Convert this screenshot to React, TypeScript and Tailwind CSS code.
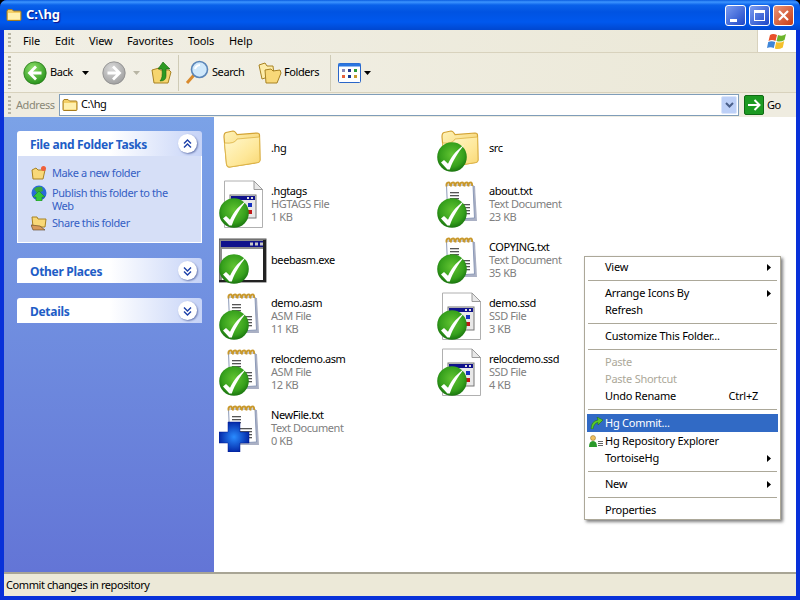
import React from "react";

const Defs = () => (
  <svg width="0" height="0" className="absolute">
    <defs>
      <linearGradient id="folderG" x1="0" y1="0" x2="1" y2="1">
        <stop offset="0" stopColor="#fff3b8" />
        <stop offset="1" stopColor="#f3c95c" />
      </linearGradient>
      <linearGradient id="folderF" x1="0" y1="0" x2="1" y2="1">
        <stop offset="0" stopColor="#fff8cf" />
        <stop offset="0.6" stopColor="#fee89a" />
        <stop offset="1" stopColor="#f8d672" />
      </linearGradient>
      <radialGradient id="checkG" cx="0.5" cy="0.42" r="0.62">
        <stop offset="0" stopColor="#62c432" />
        <stop offset="0.65" stopColor="#36a01c" />
        <stop offset="1" stopColor="#136a0c" />
      </radialGradient>
      <radialGradient id="plusG" cx="0.5" cy="0.5" r="0.55">
        <stop offset="0" stopColor="#2a8cff" />
        <stop offset="1" stopColor="#0020a0" />
      </radialGradient>
      <radialGradient id="backG" cx="0.4" cy="0.3" r="0.8">
        <stop offset="0" stopColor="#8fe06a" />
        <stop offset="1" stopColor="#1c8a12" />
      </radialGradient>
      <radialGradient id="fwdG" cx="0.4" cy="0.3" r="0.8">
        <stop offset="0" stopColor="#dadada" />
        <stop offset="1" stopColor="#9a9a9a" />
      </radialGradient>
    </defs>
  </svg>
);

const SmallFolder = ({ s = 16 }: { s?: number }) => (
  <svg width={s} height={s} viewBox="0 0 16 16" className="shrink-0">
    <path d="M1 4 L2 2.5 H6 L7.5 4 H14 Q15 4 15 5 V12.5 Q15 13.5 14 13.5 H2 Q1 13.5 1 12.5 Z" fill="#f4cf66" stroke="#a67c1c" strokeWidth="1" />
    <path d="M2 6 H14 V12.5 H2 Z" fill="#fff0ae" />
  </svg>
);

const BigFolder = () => (
  <g>
    <path d="M5 13 Q5 9 7 8.5 L14 7 Q16 7 18 10.5 L38 9 Q40.5 9 40.5 11 L41 36 Q41 38 39 38.5 L11 43 Q8 43.5 7.5 40 Z" fill="url(#folderG)" stroke="#d3a334" strokeWidth="1.2" />
    <path d="M5.5 19 Q16 20 18 15 L40.5 13 L41 36 Q41 38 39 38.5 L11 43 Q8 43.5 7.5 40 Z" fill="url(#folderF)" stroke="#dcb244" strokeWidth="0.8" />
  </g>
);

const Notepad = () => (
  <g>
    <path d="M13 6 H38 L40 41 H16 Z" fill="#aab0c4" />
    <path d="M9.5 5 H36 L37.5 38 L11 39.5 Z" fill="#ffffff" stroke="#8c9ab8" strokeWidth="1" />
    {[11, 15.5, 20, 24.5, 29, 33].map((x) => (
      <path key={x} d="M0 5.5 Q-0.5 1.5 2 1.5 Q4 1.5 3.5 5" transform={`translate(${x - 1.5} 1)`} fill="none" stroke="#c8982c" strokeWidth="1.9" />
    ))}
    {[12, 15, 18, 24, 27, 30, 33].map((y, i) => (
      <rect key={y} x={i < 3 ? 13 : 21} y={y} width={i < 3 ? 9 : 12} height="1.3" fill="#555" />
    ))}
  </g>
);

const DocApp = () => (
  <g>
    <path d="M5.5 1 H35 L43.5 9.5 V47.5 H5.5 Z" fill="#ffffff" stroke="#b0b0b0" strokeWidth="1" />
    <path d="M35 1 V9.5 H43.5 Z" fill="#e8e8e8" stroke="#9a9a9a" strokeWidth="1" />
    <rect x="11" y="15" width="26" height="23" fill="#e8e8e8" stroke="#777" strokeWidth="1" />
    <rect x="12" y="16" width="24" height="4" fill="#10128c" />
    <rect x="28" y="17" width="2" height="2" fill="#ddd" />
    <rect x="32" y="17" width="2" height="2" fill="#ddd" />
    <rect x="14" y="23" width="4" height="4" fill="#2f9a3a" />
    <rect x="29" y="23" width="4" height="4" fill="#1530c0" />
    <rect x="29" y="30" width="4" height="4" fill="#c01818" />
    <rect x="20" y="23" width="6" height="4" fill="#9aa0c8" />
    <rect x="20" y="30" width="6" height="4" fill="#c8b05a" />
  </g>
);

const Exe = () => (
  <g>
    <rect x="0" y="3" width="47" height="43" fill="#8e8e8e" />
    <rect x="0" y="3" width="47" height="43" fill="none" stroke="#555" strokeWidth="1" />
    <rect x="2" y="5" width="43" height="6" fill="#10128c" />
    <rect x="31" y="6.5" width="3" height="3" fill="#c8c8c8" />
    <rect x="36" y="6.5" width="3" height="3" fill="#c8c8c8" />
    <rect x="41" y="6.5" width="3" height="3" fill="#c8c8c8" />
    <rect x="3" y="13" width="41" height="31" fill="#ffffff" />
    <rect x="44" y="4" width="3" height="42" fill="#222" />
    <rect x="0" y="44" width="47" height="2" fill="#222" />
  </g>
);

const Check = () => (
  <g>
    <circle cx="15" cy="33" r="14.8" fill="url(#checkG)" />
    <path d="M4 38.5 L7 36 L11 39.8 C15 31 21 25 27 21 C21 29 16 36 12.8 45.5 L10.4 45.5 Z" fill="#ffffff" />
  </g>
);

const Plus = () => (
  <g>
    <path d="M9 18 H21 V28 H30 V39 H21 V48 H9 V39 H0 V28 H9 Z" fill="url(#plusG)" stroke="#001a90" strokeWidth="0.5" />
  </g>
);

type Kind = "folder" | "note" | "doc" | "exe";
type Ov = "check" | "plus" | "none";

const FileIcon = ({ kind, ov }: { kind: Kind; ov: Ov }) => (
  <svg width="48" height="48" viewBox="0 0 48 48" className="shrink-0">
    {kind === "folder" && <BigFolder />}
    {kind === "note" && <Notepad />}
    {kind === "doc" && <DocApp />}
    {kind === "exe" && <Exe />}
    {ov === "check" && <Check />}
    {ov === "plus" && <Plus />}
  </svg>
);

const files: { n: string; t?: string; s?: string; k: Kind; o: Ov }[] = [
  { n: ".hg", k: "folder", o: "none" },
  { n: "src", k: "folder", o: "check" },
  { n: ".hgtags", t: "HGTAGS File", s: "1 KB", k: "doc", o: "check" },
  { n: "about.txt", t: "Text Document", s: "23 KB", k: "note", o: "check" },
  { n: "beebasm.exe", k: "exe", o: "check" },
  { n: "COPYING.txt", t: "Text Document", s: "35 KB", k: "note", o: "check" },
  { n: "demo.asm", t: "ASM File", s: "11 KB", k: "note", o: "check" },
  { n: "demo.ssd", t: "SSD File", s: "3 KB", k: "doc", o: "check" },
  { n: "relocdemo.asm", t: "ASM File", s: "12 KB", k: "note", o: "check" },
  { n: "relocdemo.ssd", t: "SSD File", s: "4 KB", k: "doc", o: "check" },
  { n: "NewFile.txt", t: "Text Document", s: "0 KB", k: "note", o: "plus" },
];

const Gripper = () => (
  <div className="w-[3px] self-stretch my-[3px] shrink-0 bg-[repeating-linear-gradient(to_bottom,#b8b5a4_0,#b8b5a4_2px,transparent_2px,transparent_4px)]" />
);

const Caret = ({ c = "#000" }: { c?: string }) => (
  <svg width="7" height="4" viewBox="0 0 7 4" className="shrink-0">
    <path d="M0 0 H7 L3.5 4 Z" fill={c} />
  </svg>
);

const CircleArrow = ({ dir, g }: { dir: "l" | "r"; g: string }) => (
  <svg width="24" height="24" viewBox="0 0 24 24" className="shrink-0">
    <circle cx="12" cy="12" r="11.2" fill={`url(#${g})`} stroke={g === "backG" ? "#2a7a1c" : "#8a8a8a"} strokeWidth="0.8" />
    <path
      d={dir === "l" ? "M13 5.5 L6.5 12 L13 18.5 M7 12 H18.5" : "M11 5.5 L17.5 12 L11 18.5 M17 12 H5.5"}
      fill="none"
      stroke="#fff"
      strokeWidth="2.8"
    />
  </svg>
);

const Chevron = ({ up }: { up?: boolean }) => (
  <div className="w-[19px] h-[19px] rounded-full bg-white shadow-[1px_1px_2px_#6a7ab0] flex items-center justify-center shrink-0">
    <svg width="9" height="10" viewBox="0 0 9 10">
      <path
        d={up ? "M1 4.5 L4.5 1 L8 4.5 M1 8.5 L4.5 5 L8 8.5" : "M1 1.5 L4.5 5 L8 1.5 M1 5.5 L4.5 9 L8 5.5"}
        fill="none"
        stroke="#1c3fa8"
        strokeWidth="1.4"
      />
    </svg>
  </div>
);

const PanelHead = ({ title, up }: { title: string; up?: boolean }) => (
  <div className="h-[25px] rounded-t-[3px] bg-gradient-to-r from-white via-white to-[#c6d3f7] flex items-center justify-between pl-[13px] pr-[5px]">
    <span className="font-bold text-[#215dc6] text-[12px] tracking-[-0.3px] pt-[2px]">{title}</span>
    <Chevron up={up} />
  </div>
);

const TaskLink = ({ icon, children, cn }: { icon: React.ReactNode; children: React.ReactNode; cn?: string }) => (
  <div className={`flex gap-[5px] text-[#3560c4] leading-[13px] ${cn ?? ""}`}>
    <div className="w-[17px] h-[16px] shrink-0 flex justify-center">{icon}</div>
    <span className="w-[130px] pt-[1px]">{children}</span>
  </div>
);

const MenuSep = () => <div className="h-px bg-[#aca899] mx-[1px] my-[4px]" />;

const MenuItem = ({
  label,
  arrow,
  right,
  off,
  hi,
  icon,
  tall,
}: {
  label: string;
  arrow?: boolean;
  right?: string;
  off?: boolean;
  hi?: boolean;
  icon?: React.ReactNode;
  tall?: boolean;
}) => (
  <div
    className={`flex items-center ${tall ? "h-[18px]" : "h-[17px]"} ${hi ? "bg-[#316ac5] text-white" : off ? "text-[#aca899]" : "text-black"}`}
  >
    <div className="w-[18px] shrink-0 flex justify-center">{icon}</div>
    <span className="flex-1">{label}</span>
    {right && <span className="mr-[20px]">{right}</span>}
    {arrow && (
      <svg width="4" height="7" viewBox="0 0 4 7" className="mr-[7px]">
        <path d="M0 0 L4 3.5 L0 7 Z" fill="#000" />
      </svg>
    )}
  </div>
);

export default function App() {
  return (
    <div
      className="w-[800px] h-[600px] bg-black text-[11px] text-black overflow-hidden tracking-[-0.42px]"
      style={{ fontFamily: '"Noto Sans", sans-serif' }}
    >
      <Defs />
      <div className="w-full h-full rounded-t-[7px] overflow-hidden flex flex-col bg-[#0831d9]">
        {/* title bar */}
        <div className="h-[30px] shrink-0 bg-[linear-gradient(to_bottom,#0a5ce0_0,#3d95ff_2px,#0a62ea_5px,#0053e2_12px,#0058ee_22px,#0047cf_30px)] flex items-center pl-[6px] pr-[6px]">
          <SmallFolder />
          <span className="ml-[4px] text-white font-bold text-[13px] tracking-normal [text-shadow:1px_1px_1px_#0f1089]">C:\hg</span>
          <div className="ml-auto flex gap-[3px]">
            <div className="w-[21px] h-[21px] rounded-[3px] border border-white bg-[linear-gradient(135deg,#7b9cf0,#1c46c8)] flex items-end pl-[4px] pb-[3px]">
              <div className="w-[7px] h-[3px] bg-white" />
            </div>
            <div className="w-[21px] h-[21px] rounded-[3px] border border-white bg-[linear-gradient(135deg,#7b9cf0,#1c46c8)] flex items-center justify-center">
              <div className="w-[11px] h-[11px] border border-white border-t-[3px]" />
            </div>
            <div className="w-[21px] h-[21px] rounded-[3px] border border-white bg-[linear-gradient(135deg,#ea9478,#c73c14)] flex items-center justify-center">
              <svg width="11" height="11" viewBox="0 0 11 11">
                <path d="M1 1 L10 10 M10 1 L1 10" stroke="#fff" strokeWidth="2.2" />
              </svg>
            </div>
          </div>
        </div>

        <div className="flex-1 min-h-0 mx-[4px] flex flex-col bg-[#ece9d8]">
          {/* menu bar */}
          <div className="h-[23px] shrink-0 flex border-b border-[#d8d2bd] bg-gradient-to-r from-[#f1efe5] to-[#ebe8d7]">
            <div className="flex-1 flex items-center pl-[4px]">
              <Gripper />
              <div className="flex tracking-[-0.1px]">
                <span className="ml-[12px] w-[32px]">File</span>
                <span className="w-[34px]">Edit</span>
                <span className="w-[38px]">View</span>
                <span className="w-[61px]">Favorites</span>
                <span className="w-[41px]">Tools</span>
                <span>Help</span>
              </div>
            </div>
            <div className="w-[39px] bg-white border-l border-[#d8d2bd] flex items-center justify-center">
              <svg width="22" height="19" viewBox="0 0 22 19">
                <path d="M4 3 Q7 1 11 3 L9.5 9 Q6 7 2.5 9 Z" fill="#e8502a" />
                <path d="M12 3 Q16 5 20 2 L18.5 8 Q14.5 10.5 10.5 9 Z" fill="#6cb42c" />
                <path d="M2.2 10 Q5.5 8.5 9.2 10 L7.8 16 Q4.5 14.5 1 16 Z" fill="#3f86d8" />
                <path d="M10.2 10 Q14.5 11.5 18.2 9 L16.8 15.5 Q12.5 18 8.8 16.5 Z" fill="#f5c02c" />
              </svg>
            </div>
          </div>

          {/* toolbar */}
          <div className="h-[40px] shrink-0 flex items-center pl-[4px] border-b border-[#d8d2bd] bg-gradient-to-r from-[#f3f1e8] to-[#ebe8d7]">
            <Gripper />
            <div className="ml-[12px] flex items-center">
              <CircleArrow dir="l" g="backG" />
              <span className="ml-[3px] w-[32px]">Back</span>
              <Caret />
              <div className="ml-[13px]"><CircleArrow dir="r" g="fwdG" /></div>
              <div className="ml-[7px]"><Caret c="#b8b5a4" /></div>
              <svg width="22" height="24" viewBox="0 0 22 24" className="ml-[11px]">
                <path d="M1 9 L8 7 L9 9 H18 L20 11 L17 22 H3 Z" fill="#f6d56e" stroke="#a88222" />
                <path d="M12 1 L19 8 H15 V15 Q15 20 9 20 Q12 17 11 8 H7 Z" fill="#2d9a23" stroke="#14660e" strokeWidth="0.6" />
              </svg>
              <div className="w-px h-[36px] bg-[#cfcbb6] ml-[5px]" />
              <svg width="24" height="25" viewBox="0 0 24 25" className="ml-[6px]">
                <path d="M9 15 L2 23" stroke="#d98a2c" strokeWidth="3" />
                <circle cx="14.5" cy="9.5" r="8" fill="#cfe8fb" stroke="#5b86b8" strokeWidth="1.6" />
                <path d="M10 9 Q11 5.5 15 5" stroke="#fff" strokeWidth="2" fill="none" />
              </svg>
              <span className="ml-[3px] w-[46px]">Search</span>
              <svg width="24" height="22" viewBox="0 0 24 22">
                <path d="M1 3 L7 1 L9 4 L15 4 L16 13 L4 17 Z" fill="#fdeca8" stroke="#a88222" />
                <path d="M7 8 L13 7 L15 9 L22 8 L23 11 L19 21 L8 21 Z" fill="#f8d878" stroke="#a88222" />
              </svg>
              <span className="ml-[2px] w-[46px]">Folders</span>
              <div className="w-px h-[36px] bg-[#cfcbb6]" />
              <svg width="23" height="20" viewBox="0 0 23 20" className="ml-[7px]">
                <rect x="0.5" y="0.5" width="22" height="19" rx="1" fill="#fff" stroke="#2a66c8" />
                <rect x="0.5" y="0.5" width="22" height="3" fill="#2a76e0" />
                <rect x="4" y="6" width="3" height="3" fill="#8a8ab8" />
                <rect x="10" y="6" width="3" height="3" fill="#2a3a90" />
                <rect x="16" y="6" width="3" height="3" fill="#2a9a3a" />
                <rect x="4" y="12" width="3" height="3" fill="#e8603a" />
                <rect x="10" y="12" width="3" height="3" fill="#1a3a90" />
                <rect x="16" y="12" width="3" height="3" fill="#c89a2c" />
              </svg>
              <div className="ml-[3px]"><Caret /></div>
            </div>
          </div>

          {/* address */}
          <div className="h-[24px] shrink-0 flex items-center pl-[4px] bg-[#efece0]">
            <Gripper />
            <span className="ml-[5px] text-[#8a8877] w-[43px]">Address</span>
            <div className="w-[680px] h-[22px] mb-px border border-[#7f9db9] bg-white flex items-center pl-[2px] pr-[1px]">
              <SmallFolder />
              <span className="ml-[3px]">C:\hg</span>
              <div className="ml-auto w-[16px] h-[18px] rounded-[2px] bg-[#bdd0f7] border border-[#dbe6fb] flex items-center justify-center">
                <svg width="9" height="6" viewBox="0 0 9 6">
                  <path d="M1 1 L4.5 4.5 L8 1" stroke="#4a5f8a" strokeWidth="2" fill="none" />
                </svg>
              </div>
            </div>
            <div className="ml-[5px] w-[20px] h-[20px] rounded-[2px] bg-[#1c9a22] border border-[#0f6a14] flex items-center justify-center">
              <svg width="14" height="12" viewBox="0 0 14 12">
                <path d="M7.5 1 L12.5 6 L7.5 11 M12 6 H1" stroke="#fff" strokeWidth="2" fill="none" />
              </svg>
            </div>
            <span className="ml-[3px]">Go</span>
          </div>

          {/* body */}
          <div className="h-[455px] shrink-0 flex relative bg-white">
            <div className="w-[210px] shrink-0 bg-gradient-to-b from-[#7ba2e7] to-[#6375d6] pt-[14px] pl-[13px] pr-[12px] flex flex-col gap-[15px]">
              <div>
                <PanelHead title="File and Folder Tasks" up />
                <div className="h-[87px] bg-[#d6dff7] border border-t-0 border-white pt-[9px] pl-[12px] flex flex-col gap-[3px]">
                  <TaskLink
                    cn="mb-[1px]"
                    icon={
                      <svg width="16" height="16" viewBox="0 0 16 16">
                        <path d="M1 5 L5 3 L7 5 H14 L12 14 H2 Z" fill="#f8d878" stroke="#a88222" />
                        <circle cx="12.5" cy="3.5" r="2.5" fill="#f0603a" />
                      </svg>
                    }
                  >
                    Make a new folder
                  </TaskLink>
                  <TaskLink
                    icon={
                      <svg width="16" height="16" viewBox="0 0 16 16">
                        <circle cx="8" cy="8" r="7.5" fill="#2a6ad8" />
                        <path d="M3 4 Q6 1 11 2 L12 6 L6 8 Z" fill="#3aa83a" />
                        <path d="M8 6 L14 12 H11 V16 H5 V12 H2 Z" fill="#34c83a" stroke="#1a7a20" strokeWidth="0.5" />
                      </svg>
                    }
                  >
                    Publish this folder to the Web
                  </TaskLink>
                  <TaskLink
                    icon={
                      <svg width="16" height="16" viewBox="0 0 16 16">
                        <path d="M1 2 L6 2 L7 4 H15 L14 12 H2 Z" fill="#f8d878" stroke="#a88222" />
                        <path d="M0 10 L9 11 L14 15 H2 Z" fill="#d89a5a" stroke="#5a4020" strokeWidth="0.6" />
                      </svg>
                    }
                  >
                    Share this folder
                  </TaskLink>
                </div>
              </div>
              <PanelHead title="Other Places" />
              <PanelHead title="Details" />
            </div>

            <div className="flex-1 pl-[5px] pt-[7px]">
              <div className="grid grid-cols-[218px_218px] auto-rows-[56px]">
                {files.map((f) => (
                  <div key={f.n} className="flex items-center h-[48px]">
                    <FileIcon kind={f.k} ov={f.o} />
                    <div className="ml-[4px] leading-[13px] -mt-[1px]">
                      <div>{f.n}</div>
                      {f.t && <div className="text-[#808080]">{f.t}</div>}
                      {f.s && <div className="text-[#808080]">{f.s}</div>}
                    </div>
                  </div>
                ))}
              </div>
            </div>

            {/* context menu */}
            <div className="absolute left-[580px] top-[139px] w-[197px] h-[264px] bg-white border border-[#aca899] p-[2px] shadow-[2px_2px_3px_rgba(0,0,0,0.5)] tracking-[-0.25px]">
              <MenuItem label="View" arrow />
              <MenuSep />
              <MenuItem label="Arrange Icons By" arrow />
              <MenuItem label="Refresh" />
              <MenuSep />
              <MenuItem label="Customize This Folder..." />
              <MenuSep />
              <MenuItem label="Paste" off />
              <MenuItem label="Paste Shortcut" off />
              <MenuItem label="Undo Rename" right="Ctrl+Z" />
              <MenuSep />
              <MenuItem
                label="Hg Commit..."
                hi
                tall
                icon={
                  <svg width="13" height="12" viewBox="0 0 13 12">
                    <path d="M1 12 Q1 4 8 3 L7 0 L13 3 L8 8 L8 5.5 Q4 6 3 12 Z" fill="#5ac82a" stroke="#1a6a10" strokeWidth="0.5" />
                  </svg>
                }
              />
              <MenuItem
                label="Hg Repository Explorer"
                tall
                icon={
                  <svg width="14" height="12" viewBox="0 0 14 12">
                    <circle cx="4" cy="3" r="2.5" fill="#f0c060" stroke="#8a6a20" strokeWidth="0.5" />
                    <path d="M0 12 Q0 6 4 6 Q8 6 8 12 Z" fill="#2a9a2a" />
                    <rect x="9" y="6" width="5" height="1" fill="#666" />
                    <rect x="9" y="8" width="5" height="1" fill="#666" />
                    <rect x="9" y="10" width="5" height="1" fill="#666" />
                  </svg>
                }
              />
              <MenuItem label="TortoiseHg" arrow />
              <MenuSep />
              <MenuItem label="New" arrow />
              <MenuSep />
              <MenuItem label="Properties" />
            </div>
          </div>

          {/* status */}
          <div className="flex-1 border-t-2 border-[#a8a595] bg-[#ece9d8] flex items-center pl-[2px] pt-[1px]">
            <span>Commit changes in repository</span>
          </div>
        </div>
        <div className="h-[4px] shrink-0" />
      </div>
    </div>
  );
}
